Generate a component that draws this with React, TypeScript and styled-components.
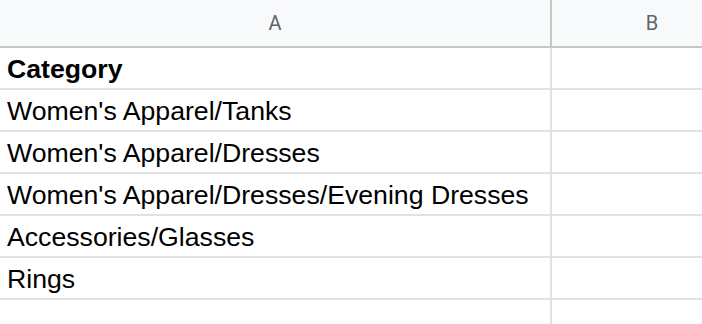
import React from "react";
import styled, { createGlobalStyle } from "styled-components";

const GlobalStyle = createGlobalStyle`
  html, body {
    margin: 0;
    padding: 0;
    background: #ffffff;
    overflow: hidden;
  }
`;

const Sheet = styled.div`
  display: grid;
  grid-template-columns: 550px 2px 200px;
  width: 702px;
  height: 324px;
  overflow: hidden;
  background: #ffffff;
`;

const HeaderCell = styled.div`
  height: 46px;
  background: #f8f9fa;
  border-bottom: 2px solid #c4c7c5;
  display: flex;
  align-items: center;
  justify-content: center;
  font-family: Roboto, "Liberation Sans", Arial, sans-serif;
  font-size: 20px;
  color: #5f6368;
`;

const Divider = styled.div<{ $header?: boolean }>`
  background: ${(p) => (p.$header ? "#c4c7c5" : "#e1e1e1")};
  height: ${(p) => (p.$header ? "48px" : "auto")};
  flex: ${(p) => (p.$header ? "none" : "1")};
`;

const Column = styled.div`
  display: flex;
  flex-direction: column;
  min-width: 0;
`;

const BodyCell = styled.div<{ $bold?: boolean }>`
  height: 36px;
  border-bottom: 2px solid #e1e1e1;
  display: flex;
  align-items: flex-end;
  padding: 0 6px 4px 7px;
  font-family: "Liberation Sans", Arial, sans-serif;
  font-size: 26.67px;
  line-height: 30px;
  font-weight: ${(p) => (p.$bold ? 700 : 400)};
  color: #000000;
  white-space: nowrap;
  overflow: hidden;
`;

const rows: { text: string; bold?: boolean }[] = [
  { text: "Category", bold: true },
  { text: "Women's Apparel/Tanks" },
  { text: "Women's Apparel/Dresses" },
  { text: "Women's Apparel/Dresses/Evening Dresses" },
  { text: "Accessories/Glasses" },
  { text: "Rings" },
  { text: "" },
];

export default function App() {
  return (
    <>
      <GlobalStyle />
      <Sheet>
        <Column>
          <HeaderCell>A</HeaderCell>
          {rows.map((r, i) => (
            <BodyCell key={i} $bold={r.bold}>
              {r.text}
            </BodyCell>
          ))}
        </Column>
        <Column>
          <Divider $header />
          <Divider />
        </Column>
        <Column>
          <HeaderCell>B</HeaderCell>
          {rows.map((_, i) => (
            <BodyCell key={i} />
          ))}
        </Column>
      </Sheet>
    </>
  );
}
